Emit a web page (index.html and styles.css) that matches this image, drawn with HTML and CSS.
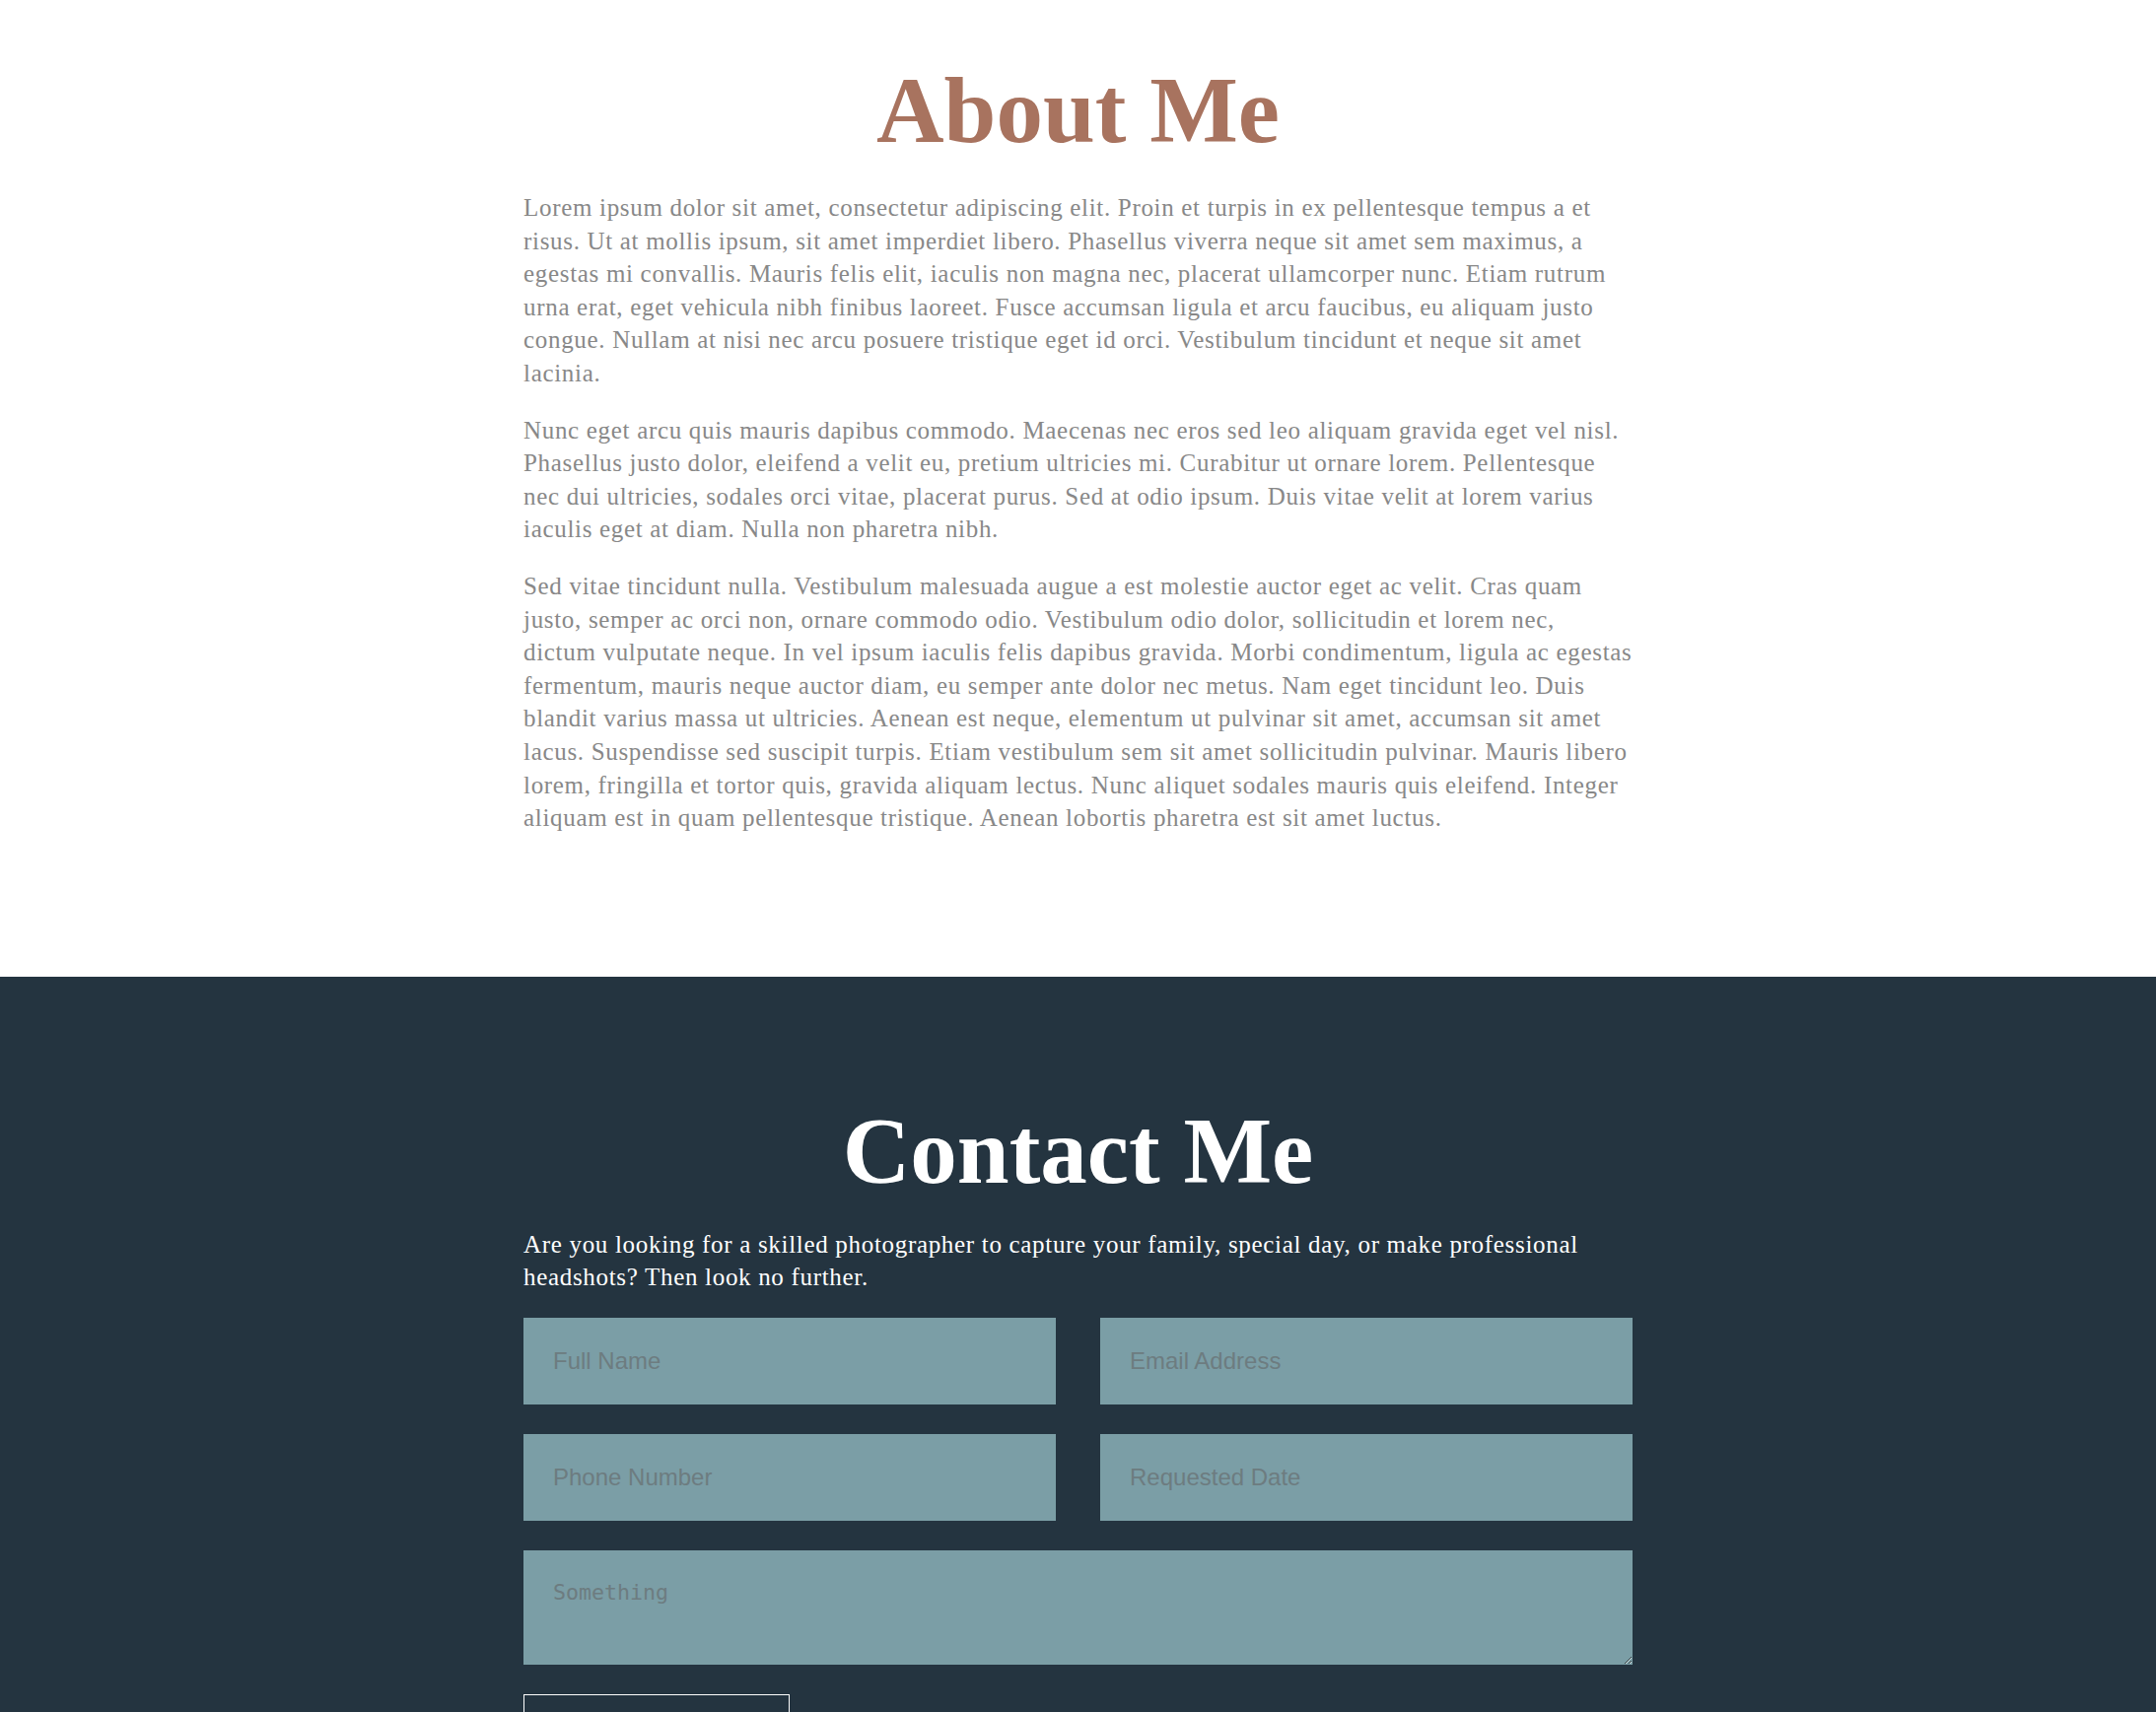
FILE: index.html
```html
<!DOCTYPE html>
<html lang="en">
<head>
<meta charset="utf-8">
<title>About Me</title>
<link rel="stylesheet" href="styles.css">
</head>
<body>
<section class="about">
  <div class="container">
    <h1 class="title title-about">About Me</h1>
    <p class="text">Lorem ipsum dolor sit amet, consectetur adipiscing elit. Proin et turpis in ex pellentesque tempus a et risus. Ut at mollis ipsum, sit amet imperdiet libero. Phasellus viverra neque sit amet sem maximus, a egestas mi convallis. Mauris felis elit, iaculis non magna nec, placerat ullamcorper nunc. Etiam rutrum urna erat, eget vehicula nibh finibus laoreet. Fusce accumsan ligula et arcu faucibus, eu aliquam justo congue. Nullam at nisi nec arcu posuere tristique eget id orci. Vestibulum tincidunt et neque sit amet lacinia.</p>
    <p class="text">Nunc eget arcu quis mauris dapibus commodo. Maecenas nec eros sed leo aliquam gravida eget vel nisl. Phasellus justo dolor, eleifend a velit eu, pretium ultricies mi. Curabitur ut ornare lorem. Pellentesque nec dui ultricies, sodales orci vitae, placerat purus. Sed at odio ipsum. Duis vitae velit at lorem varius iaculis eget at diam. Nulla non pharetra nibh.</p>
    <p class="text">Sed vitae tincidunt nulla. Vestibulum malesuada augue a est molestie auctor eget ac velit. Cras quam justo, semper ac orci non, ornare commodo odio. Vestibulum odio dolor, sollicitudin et lorem nec, dictum vulputate neque. In vel ipsum iaculis felis dapibus gravida. Morbi condimentum, ligula ac egestas fermentum, mauris neque auctor diam, eu semper ante dolor nec metus. Nam eget tincidunt leo. Duis blandit varius massa ut ultricies. Aenean est neque, elementum ut pulvinar sit amet, accumsan sit amet lacus. Suspendisse sed suscipit turpis. Etiam vestibulum sem sit amet sollicitudin pulvinar. Mauris libero lorem, fringilla et tortor quis, gravida aliquam lectus. Nunc aliquet sodales mauris quis eleifend. Integer aliquam est in quam pellentesque tristique. Aenean lobortis pharetra est sit amet luctus.</p>
  </div>
</section>
<section class="contact">
  <div class="container">
    <h2 class="title title-contact">Contact Me</h2>
    <p class="text text-light">Are you looking for a skilled photographer to capture your family, special day, or make professional headshots? Then look no further.</p>
    <form class="form">
      <div class="form-grid">
        <input class="field" type="text" placeholder="Full Name">
        <input class="field" type="email" placeholder="Email Address">
        <input class="field" type="tel" placeholder="Phone Number">
        <input class="field" type="text" placeholder="Requested Date">
      </div>
      <textarea class="field area" placeholder="Something"></textarea>
      <button class="submit" type="submit">Submit</button>
    </form>
  </div>
</section>
</body>
</html>
```

FILE: styles.css
```css
* {
  box-sizing: border-box;
}

body {
  margin: 0;
  background: #ffffff;
  font-family: "Liberation Serif", "Times New Roman", serif;
}

.container {
  max-width: 1125px;
  margin: 0 auto;
}

.about {
  padding: 65px 0 120px;
}

.title {
  margin: 0;
  font-family: "Liberation Serif", serif;
  font-weight: 700;
  font-size: 95px;
  line-height: 95px;
  text-align: center;
}

.title-about {
  color: #a8735f;
  margin-bottom: 34px;
}

.text {
  margin: 0 0 24px;
  font-size: 25px;
  line-height: 33.6px;
  letter-spacing: 0.685px;
  color: #888888;
}

.contact {
  background: #243440;
  padding: 130px 0 80px;
}

.title-contact {
  color: #ffffff;
  margin-bottom: 30px;
}

.text-light {
  color: #ffffff;
}

.form {
  display: flex;
  flex-direction: column;
  gap: 30px;
  align-items: flex-start;
}

.form-grid {
  width: 100%;
  display: grid;
  grid-template-columns: 1fr 1fr;
  column-gap: 45px;
  row-gap: 30px;
}

.field {
  display: block;
  width: 100%;
  margin: 0;
  border: none;
  outline: none;
  background: #7b9ea6;
  padding: 30px;
  font-family: "Liberation Sans", Arial, sans-serif;
  font-size: 24px;
  line-height: 28px;
  color: #333333;
  border-radius: 0;
}

.field::placeholder {
  color: #6d7c80;
  opacity: 1;
}

.area {
  height: 116px;
  font-family: "DejaVu Sans Mono", monospace;
  font-size: 21.6px;
  line-height: 25px;
  resize: vertical;
}

.submit {
  width: 270px;
  background: transparent;
  border: 1px solid #ffffff;
  color: #ffffff;
  padding: 40px 20px;
  font-family: "Liberation Serif", serif;
  font-size: 24px;
  cursor: pointer;
}
```
